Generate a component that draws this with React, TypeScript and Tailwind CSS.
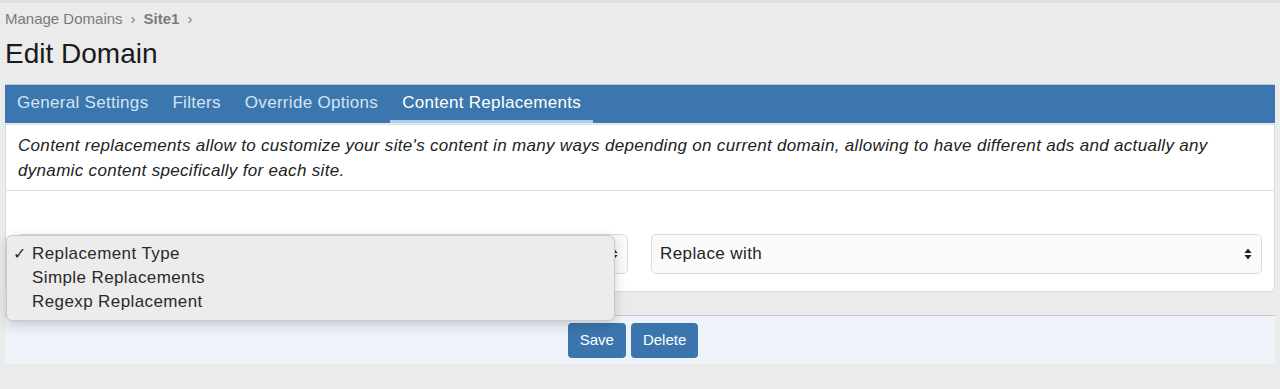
import React from 'react';

const tabs = ['General Settings', 'Filters', 'Override Options', 'Content Replacements'];

const SelectArrows = () => (
  <svg width="8" height="12" viewBox="0 0 8 12" className="shrink-0">
    <path d="M4 0.5 L7.5 5 H0.5 Z" fill="#222" />
    <path d="M4 11.5 L7.5 7 H0.5 Z" fill="#222" />
  </svg>
);

export default function App() {
  return (
    <div className="min-h-screen bg-[#ebebeb] border-t-[3px] border-[#e0e0e0] font-['Liberation_Sans',Arial,sans-serif] text-[#333]">
      <div className="px-[5px]">
        {/* Breadcrumb */}
        <div className="h-[28px] pt-[4px] flex items-center gap-[8px] text-[15px] text-[#7a7a7a]">
          <span>Manage Domains</span>
          <span className="text-[15px]">›</span>
          <span className="font-bold">Site1</span>
          <span className="text-[15px]">›</span>
        </div>

        <h1 className="mt-[3px] h-[40px] flex items-center text-[28px] text-[#1a1a1a] leading-none">Edit Domain</h1>

        {/* Tabs */}
        <div className="mt-[10px] h-[39px] flex bg-[#3b77ae] border-t border-[#b9c9d8]">
          {tabs.map((t, i) => {
            const active = i === tabs.length - 1;
            return (
              <div
                key={t}
                className={`px-[12px] flex items-center text-[17px] tracking-[0.3px] border-b-[3px] ${
                  active ? 'text-white border-[#a9cdeb]' : 'text-[#d3e3f3] border-transparent'
                }`}
              >
                {t}
              </div>
            );
          })}
        </div>

        {/* Panel */}
        <div className="mt-[1px] bg-white border border-[#dcdcdc] rounded-b-[5px]">
          <p className="pl-[12px] pr-[40px] pt-[8px] pb-[7px] text-[17px] tracking-[0.32px] italic leading-[25px] text-[#222] border-b border-[#dedede]">
            Content replacements allow to customize your site's content in many ways depending on current domain, allowing to have different ads and actually any dynamic content specifically for each site.
          </p>
          <div className="pl-[11px] pr-[12px] pt-[43px] pb-[17px] grid grid-cols-2 gap-[23px]">
            <div className="relative">
              <div className="h-[40px] rounded-[5px] border border-[#dcdcdc] bg-[#fafafa] flex items-center justify-end px-[9px]">
                <SelectArrows />
              </div>
              {/* Open dropdown menu */}
              <div className="absolute left-[-11px] top-[1px] w-[609px] rounded-[6px] bg-[#ececec] border border-[#c9c9c9] shadow-[0_4px_12px_rgba(0,0,0,0.18)] py-[6px] text-[17px] tracking-[0.4px] text-[#2a2a2a] z-10">
                <div className="h-[24px] flex items-center">
                  <span className="w-[25px] pl-[6px] text-[16px]">✓</span>
                  <span>Replacement Type</span>
                </div>
                <div className="h-[24px] flex items-center pl-[25px]">Simple Replacements</div>
                <div className="h-[24px] flex items-center pl-[25px]">Regexp Replacement</div>
              </div>
            </div>
            <div className="h-[40px] rounded-[5px] border border-[#dcdcdc] bg-[#fafafa] flex items-center justify-between pl-[8px] pr-[9px] text-[17px] tracking-[0.4px] text-[#222]">
              <span>Replace with</span>
              <SelectArrows />
            </div>
          </div>
        </div>

        {/* Footer */}
        <div className="mt-[23px] h-[49px] bg-[#eef3fa] border-t border-[#c8ccd0] flex items-center justify-center gap-[5px] pr-[14px]">
          <button className="h-[35px] px-[12px] rounded-[4px] bg-[#3a76ad] text-white text-[15px]">Save</button>
          <button className="h-[35px] px-[12px] rounded-[4px] bg-[#3a76ad] text-white text-[15px]">Delete</button>
        </div>
      </div>
    </div>
  );
}
